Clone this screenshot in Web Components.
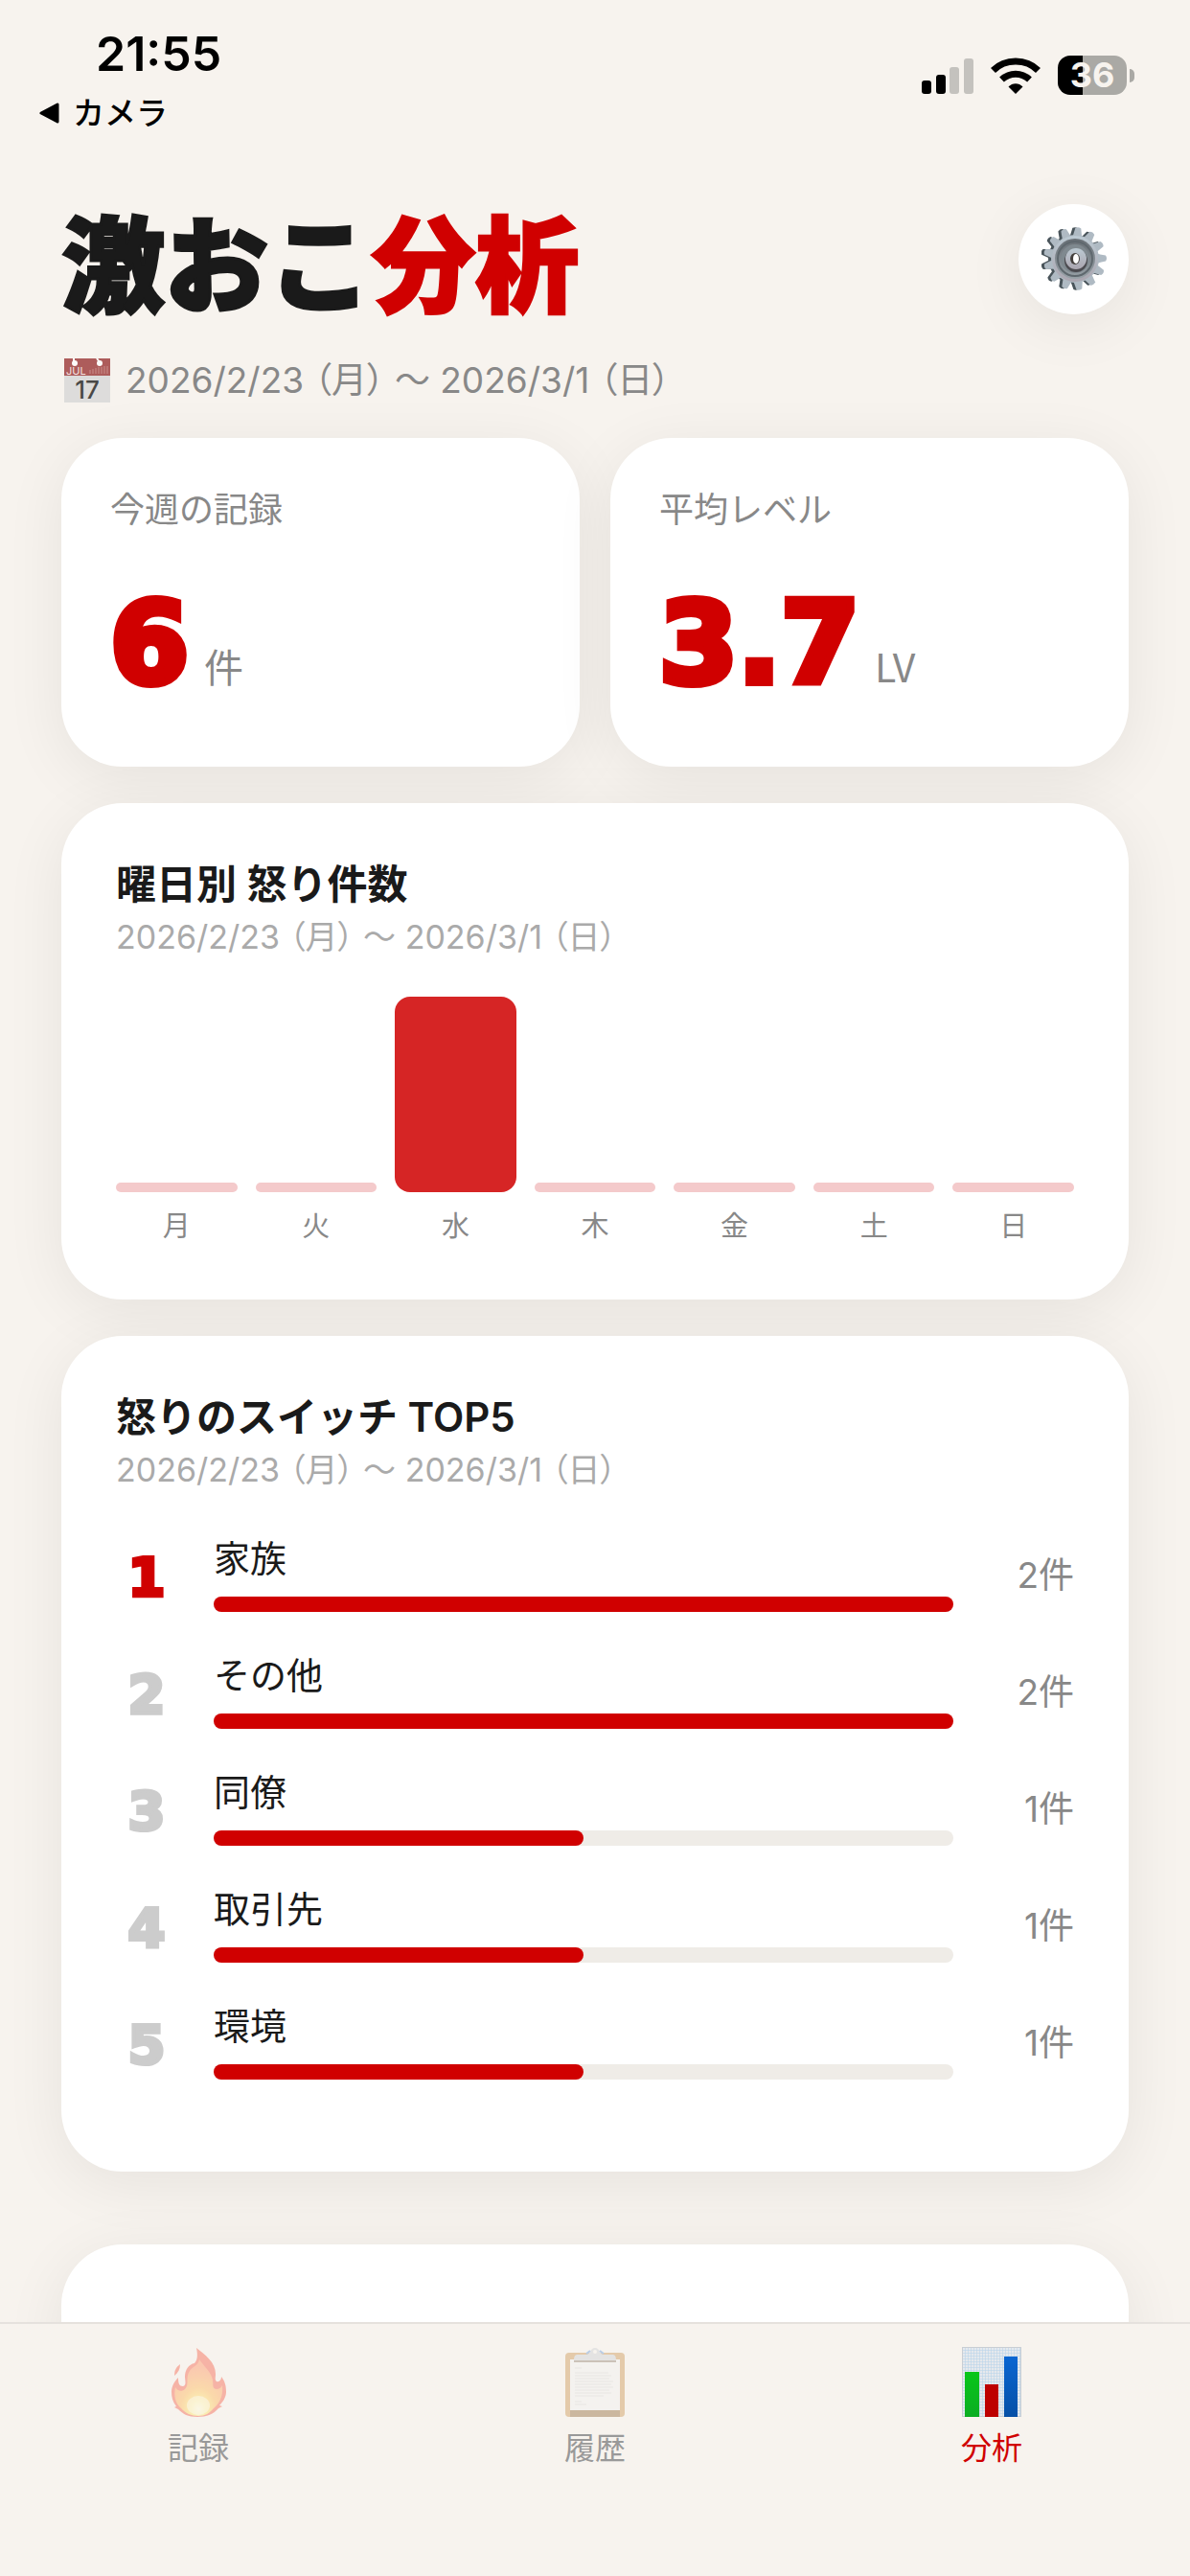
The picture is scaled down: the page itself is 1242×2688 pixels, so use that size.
<!DOCTYPE html>
<html lang="ja">
<head>
<meta charset="utf-8">
<meta name="viewport" content="width=device-width, initial-scale=1">
<title>激おこ分析</title>
<style>
  html, body { height: 100%; margin: 0; }
  body {
    --bg: #f7f3ee;
    --red: #d00000;
    --ink: #1a1a1a;
    --muted: #888;
    --shadow: 0 12px 64px rgba(0, 0, 0, 0.07);
    --display: "DejaVu Sans", "Noto Sans CJK JP", sans-serif;
    background: var(--bg);
    color: var(--ink);
    font-family: Inter, "Noto Sans CJK JP", sans-serif;
  }
</style>
</head>
<body>
<geki-app>
  <status-bar slot="status" time="21:55" back="カメラ" battery="36"></status-bar>
  <page-header>激おこ<span slot="accent">分析</span></page-header>
  <week-range>2026/2/23 （月） 〜 2026/3/1 （日）</week-range>
  <stat-row>
    <stat-card label="今週の記録" value="6" unit="件"></stat-card>
    <stat-card label="平均レベル" value="3.7" unit="LV"></stat-card>
  </stat-row>
  <panel-card heading="曜日別 怒り件数" sub="2026/2/23 （月） 〜 2026/3/1 （日）">
    <week-chart values="0,0,6,0,0,0,0"></week-chart>
  </panel-card>
  <panel-card heading="怒りのスイッチ TOP5" sub="2026/2/23 （月） 〜 2026/3/1 （日）">
    <rank-list>
      <rank-item rank="1" count="2" max="2">家族</rank-item>
      <rank-item rank="2" count="2" max="2">その他</rank-item>
      <rank-item rank="3" count="1" max="2">同僚</rank-item>
      <rank-item rank="4" count="1" max="2">取引先</rank-item>
      <rank-item rank="5" count="1" max="2">環境</rank-item>
    </rank-list>
  </panel-card>
  <panel-card class="next"></panel-card>
  <tab-bar slot="tabs">
    <tab-item href="#record" icon="fire">記録</tab-item>
    <tab-item href="#history" icon="clipboard">履歴</tab-item>
    <tab-item href="#analysis" icon="chart" active>分析</tab-item>
  </tab-bar>
</geki-app>

<script>
const ICONS = {
  fire: `
    <svg viewBox="0 0 62 74" width="62" height="74" aria-hidden="true">
      <defs>
        <radialGradient id="f" cx="50%" cy="88%" r="75%">
          <stop offset="0" stop-color="#fffbd0"/><stop offset=".2" stop-color="#ffe95c"/>
          <stop offset=".5" stop-color="#ffb347"/><stop offset="1" stop-color="#ff8a55"/>
        </radialGradient>
      </defs>
      <path fill="#f5553d" d="M29 1c9 7 20 15 20 27 0 4-1 6 1 8 3 1 5-2 5-5 4 5 5 10 5 16 0 5-3 10-7 14l3 1-4 2c-5 6-12 9-22 9S15 70 10 65l-4-2 2-1C4 57 3 52 3 47c0-6 3-11 7-15 0 6 1 9 5 9 4-1 2-6 2-10 0-7 4-13 10-14 4-4 3-11 2-16z"/>
      <path fill="#f5553d" d="M12 18c0 5-2 9-6 12 0-6 2-9 6-12z"/>
      <path fill="url(#f)" d="M32 13c4 6 10 11 13 18 3 8-1 12 5 13 3 0 5-2 6-4 1 10-2 18-9 24-4 5-9 8-16 8s-14-3-18-8C7 59 5 51 7 42c2 4 7 5 10 2 5-5 0-12 5-19 3-5 9-5 10-12z"/>
      <ellipse cx="31" cy="61" rx="12" ry="10" fill="#fffde0" opacity=".6"/>
    </svg>`,
  clipboard: `
    <svg viewBox="0 0 62 74" width="62" height="74" aria-hidden="true">
      <rect y="6" width="62" height="67" rx="4" fill="#c98f45"/>
      <rect x="5" y="66" width="52" height="7" fill="#8a5f2c"/>
      <rect x="5" y="13" width="52" height="53" fill="#f1f1f1"/>
      <rect x="9" y="14" width="44" height="2" fill="#8c7a68"/>
      <path fill="none" stroke="#d4d4d4" stroke-width="1" d="M10 22h7M10 27h35M10 30h38M10 33h36M10 36h40M10 39h38M10 42h40M10 45h36M10 48h38M10 51h30M10 57h7M10 60h12"/>
      <path d="M22 8c4 0 4-7 9-7s5 7 9 7h9c3 0 4 2 4 6H9c0-4 1-6 4-6z" fill="#c9ccd2"/>
      <path d="M22 7l4-3M40 7l-4-3" stroke="#5e95dd" stroke-width="2"/>
      <circle cx="31" cy="5" r="2" fill="#f7f3ee"/>
    </svg>`,
  chart: `
    <svg viewBox="0 0 62 74" width="62" height="74" aria-hidden="true">
      <defs>
        <pattern id="g" width="3" height="3" patternUnits="userSpaceOnUse">
          <path d="M0 0h3M0 0v3" stroke="#b4d2ea" stroke-width="1"/>
        </pattern>
        <linearGradient id="b" x2="0" y2="1"><stop stop-color="#0a66d2"/><stop offset="1" stop-color="#0650a6"/></linearGradient>
        <linearGradient id="n" x2="0" y2="1"><stop stop-color="#08c61a"/><stop offset="1" stop-color="#0bad22"/></linearGradient>
      </defs>
      <rect width="62" height="73" fill="#e6e9ed"/>
      <rect width="62" height="73" fill="url(#g)"/>
      <rect x=".5" y=".5" width="61" height="72" fill="none" stroke="#c9ced4"/>
      <rect x="3" y="26" width="15" height="47" fill="url(#n)"/>
      <rect x="24" y="39" width="14" height="34" fill="#bd0000"/>
      <rect x="44" y="10" width="14" height="63" fill="url(#b)"/>
    </svg>`,
  calendar: `
    <svg viewBox="0 0 48 46" width="48" height="46" aria-hidden="true">
      <rect width="48" height="46" fill="#d3d3d3"/>
      <rect width="48" height="18" fill="#8f1d1d"/>
      <circle cx="11" cy="5" r="3" fill="#fff"/><circle cx="37" cy="5" r="3" fill="#fff"/>
      <path d="M10 0v4M34 0l3 4" stroke="#fff" stroke-width="2"/>
      <path d="M27 12v4M30 11v5M33 10v6M36 9v7M39 9v7M42 8v8M45 8v8" stroke="#b86464" stroke-width="1"/>
      <text x="2" y="17" font-size="11" fill="#f2dede">JUL</text>
      <text x="24" y="42" font-size="26" font-weight="500" text-anchor="middle" fill="#000">17</text>
    </svg>`,
  wifi: `
    <svg viewBox="0 0 52 38" width="52" height="38" aria-hidden="true">
      <g fill="none" stroke="#000" stroke-width="7">
        <path d="M2.500 13.500C15 .8 37 .8 49.500 13.500"/>
        <path d="M11.500 23C20 15.200 32 15.200 40.500 23"/>
      </g>
      <path d="M18.500 30.500c4-4.500 11-4.500 15 0L26 38z"/>
    </svg>`,
  signal: `
    <svg viewBox="0 0 54 38" width="54" height="38" aria-hidden="true">
      <rect y="24" width="10" height="14" rx="3"/>
      <rect x="15" y="18" width="10" height="20" rx="3"/>
      <rect x="29" y="10" width="10" height="28" rx="3" fill="#c4c2be"/>
      <rect x="44" y="1" width="10" height="37" rx="3" fill="#c4c2be"/>
    </svg>`,
  gear: gearIcon(),
};

// Thirteen-tooth cog, with a dark copy behind it for the thickness
function gearIcon() {
  const teeth = [];
  for (let i = 0; i < 13; i++) {
    teeth.push(`<path d="M-5-22L-3-32Q0-34 3-32L5-22z" transform="rotate(${i * 360 / 13 + 6})"/>`);
  }
  const cog = teeth.join('') + '<circle r="25"/>';
  return `
    <svg viewBox="-34 -34 68 68" width="68" height="68" aria-hidden="true">
      <defs>
        <linearGradient id="m" x2="0" y2="1"><stop stop-color="#bccad3"/><stop offset="1" stop-color="#aaa5af"/></linearGradient>
        <linearGradient id="d" x2="0" y2="1"><stop stop-color="#686f75"/><stop offset="1" stop-color="#98a1a7"/></linearGradient>
      </defs>
      <g fill="#49545a" transform="translate(-2 0)">${cog}</g>
      <g fill="#afbac3" transform="translate(1 0)">${cog}</g>
      <circle cx="1" r="24" fill="url(#m)"/>
      <circle cx="1" r="21" fill="url(#d)"/>
      <circle cx="1" r="18" fill="none" stroke="#5f686e" stroke-width="2"/>
      <circle cx="1" r="15" fill="#7f898f"/>
      <circle cx="2" cy="2" r="12" fill="#4c4b50"/>
      <circle cx="2" r="11" fill="url(#m)"/>
      <ellipse cx="1" rx="5" ry="6" fill="#433f3c"/>
      <ellipse cx="2" rx="3" ry="5" fill="#fff"/>
    </svg>`;
}

class BaseElement extends HTMLElement {
  constructor() {
    super();
    this.attachShadow({ mode: 'open' });
  }

  connectedCallback() {
    this.shadowRoot.innerHTML = this.render();
  }
}

class GekiApp extends BaseElement {
  render() {
    return `
      <style>
        :host { display: flex; flex-direction: column; height: 100vh; overflow: hidden; }
        main { flex: 1; min-height: 0; overflow-y: auto; scrollbar-width: none; }
        .content { display: flex; flex-direction: column; padding: 0 64px; }
      </style>
      <main>
        <slot name="status"></slot>
        <div class="content"><slot></slot></div>
      </main>
      <slot name="tabs"></slot>`;
  }
}

class StatusBar extends BaseElement {
  render() {
    const battery = this.getAttribute('battery');
    return `
      <style>
        :host { display: flex; justify-content: space-between; align-items: flex-start; height: 190px; box-sizing: border-box; padding: 32px 58px 0 40px; color: #000; }
        .left { display: grid; gap: 14px; }
        time { padding-left: 60px; font-size: 50px; line-height: 48px; font-weight: 600; }
        a { display: flex; align-items: center; gap: 14px; color: inherit; text-decoration: none; font-size: 33px; line-height: 48px; font-weight: 500; }
        .right { display: flex; align-items: center; gap: 18px; padding-top: 26px; }
        .power { display: flex; align-items: center; gap: 3px; }
        .battery { width: 72px; height: 41px; border-radius: 13px; background: linear-gradient(90deg, #000 ${battery}%, #aaa9a5 ${battery}%); color: var(--bg); font-size: 36px; line-height: 41px; font-weight: 700; text-align: center; }
        .nub { width: 5px; height: 14px; border-radius: 0 6px 6px 0; background: #aaa9a5; }
      </style>
      <div class="left">
        <time>${this.getAttribute('time')}</time>
        <a href="#back">
          <svg viewBox="0 0 22 22" width="22" height="22" aria-hidden="true"><path d="M20 2v18L3 11z" stroke="#000" stroke-width="3" stroke-linejoin="round"/></svg>
          ${this.getAttribute('back')}
        </a>
      </div>
      <div class="right">
        ${ICONS.signal}${ICONS.wifi}
        <div class="power"><div class="battery">${battery}</div><div class="nub"></div></div>
      </div>`;
  }
}

class PageHeader extends BaseElement {
  render() {
    return `
      <style>
        :host { display: flex; justify-content: space-between; align-items: center; }
        h1 { margin: 0; font-family: "Noto Sans CJK JP", sans-serif; font-size: 108px; line-height: 160px; font-weight: 900; -webkit-text-stroke: 3px currentColor; white-space: nowrap; }
        .accent { color: var(--red); }
        button { display: grid; place-items: center; width: 115px; height: 115px; padding: 0; border: 0; border-radius: 50%; background: #fff; box-shadow: var(--shadow); }
      </style>
      <h1><slot></slot><span class="accent"><slot name="accent"></slot></span></h1>
      <button aria-label="設定">${ICONS.gear}</button>`;
  }
}

class WeekRange extends BaseElement {
  render() {
    return `
      <style>
        :host { display: flex; align-items: center; gap: 16px; padding-left: 3px; margin: 19px 0 32px; font-size: 37px; line-height: 56px; font-feature-settings: "palt"; color: var(--muted); white-space: nowrap; }
        svg { opacity: 0.7; }
      </style>
      ${ICONS.calendar}<span><slot></slot></span>`;
  }
}

class StatRow extends BaseElement {
  render() {
    return `
      <style>
        :host { display: grid; grid-template-columns: 1fr 1fr; gap: 32px; margin-bottom: 38px; }
      </style>
      <slot></slot>`;
  }
}

class StatCard extends BaseElement {
  render() {
    return `
      <style>
        :host { display: block; padding: 51px; border-radius: 64px; background: #fff; box-shadow: var(--shadow); color: var(--muted); }
        .label { font-size: 36px; line-height: 48px; }
        .value { display: flex; align-items: baseline; gap: 16px; margin-top: 38px; }
        .number { color: var(--red); font-family: var(--display); font-size: 118px; line-height: 155px; font-weight: 700; -webkit-text-stroke: 8px currentColor; }
        .unit { font-family: "Noto Sans CJK JP", sans-serif; font-size: 41px; line-height: 48px; }
      </style>
      <div class="label">${this.getAttribute('label')}</div>
      <div class="value"><span class="number">${this.getAttribute('value')}</span><span class="unit">${this.getAttribute('unit')}</span></div>`;
  }
}

class PanelCard extends BaseElement {
  render() {
    const heading = this.getAttribute('heading');
    return `
      <style>
        :host { display: block; margin-bottom: 38px; padding: 57px; border-radius: 64px; background: #fff; box-shadow: var(--shadow); }
        :host(.next) { margin-top: 38px; min-height: 240px; }
        h2 { margin: 0; font-size: 42px; line-height: 56px; font-weight: 600; }
        p { margin: 0; font-size: 34px; line-height: 54px; font-feature-settings: "palt"; color: #aaa; white-space: nowrap; }
      </style>` +
      (heading ? `<h2>${heading}</h2><p>${this.getAttribute('sub')}</p>` : ``) +
      `<slot></slot>`;
  }
}

class WeekChart extends BaseElement {
  render() {
    const days = ['月', '火', '水', '木', '金', '土', '日'];
    const values = this.getAttribute('values').split(',').map(Number);
    const max = Math.max(...values);
    const columns = days.map((day, i) => `
      <div class="day">
        <div class="track"><div class="bar ${values[i] ? 'filled' : ''}" style="height: ${values[i] / max * 100}%"></div></div>
        ${day}
      </div>`);
    return `
      <style>
        :host { display: grid; grid-template-columns: repeat(7, 1fr); gap: 19px; margin-top: 35px; }
        .day { text-align: center; font-size: 29px; line-height: 38px; color: var(--muted); }
        .track { display: flex; align-items: flex-end; height: 204px; margin-bottom: 17px; }
        .bar { flex: 1; min-height: 10px; border-radius: 5px; background: #f4cacb; }
        .filled { border-radius: 16px; background: #d62525; }
      </style>` + columns.join('');
  }
}

class RankList extends BaseElement {
  render() {
    return `
      <style>
        :host { display: grid; gap: 46px; margin-top: 45px; padding-bottom: 39px; }
      </style>
      <slot></slot>`;
  }
}

class RankItem extends BaseElement {
  render() {
    const count = this.getAttribute('count');
    const width = count / this.getAttribute('max') * 100;
    return `
      <style>
        :host { display: grid; grid-template-columns: 64px 1fr 88px; column-gap: 38px; align-items: center; }
        .rank { padding-top: 4px; text-align: center; color: #ccc; font-family: var(--display); font-size: 56px; line-height: 72px; font-weight: 700; -webkit-text-stroke: 4px currentColor; }
        :host([rank="1"]) .rank { color: var(--red); }
        .name { font-size: 38px; line-height: 40px; margin-bottom: 20px; }
        .track { height: 16px; border-radius: 8px; background: #efece7; }
        .fill { width: ${width}%; height: 100%; border-radius: 8px; background: var(--red); }
        .count { text-align: right; font-size: 37px; line-height: 48px; color: var(--muted); }
      </style>
      <div class="rank">${this.getAttribute('rank')}</div>
      <div>
        <div class="name"><slot></slot></div>
        <div class="track"><div class="fill"></div></div>
      </div>
      <div class="count">${count}件</div>`;
  }
}

class TabBar extends BaseElement {
  render() {
    return `
      <style>
        :host { display: block; background: var(--bg); border-top: 2px solid #e5e1dd; position: relative; }
        nav { display: grid; grid-template-columns: repeat(3, 1fr); min-height: 263px; }
      </style>
      <nav><slot></slot></nav>`;
  }
}

class TabItem extends BaseElement {
  render() {
    return `
      <style>
        :host { display: block; }
        a { display: flex; flex-direction: column; align-items: center; gap: 12px; padding-top: 24px; color: #999; text-decoration: none; font-size: 32px; line-height: 40px; }
        svg { display: block; opacity: 0.4; }
        :host([active]) a { color: var(--red); }
        :host([active]) svg { opacity: 1; }
      </style>
      <a href="${this.getAttribute('href')}">${ICONS[this.getAttribute('icon')]}<span><slot></slot></span></a>`;
  }
}

customElements.define('geki-app', GekiApp);
customElements.define('status-bar', StatusBar);
customElements.define('page-header', PageHeader);
customElements.define('week-range', WeekRange);
customElements.define('stat-row', StatRow);
customElements.define('stat-card', StatCard);
customElements.define('panel-card', PanelCard);
customElements.define('week-chart', WeekChart);
customElements.define('rank-list', RankList);
customElements.define('rank-item', RankItem);
customElements.define('tab-bar', TabBar);
customElements.define('tab-item', TabItem);
</script>
</body>
</html>
